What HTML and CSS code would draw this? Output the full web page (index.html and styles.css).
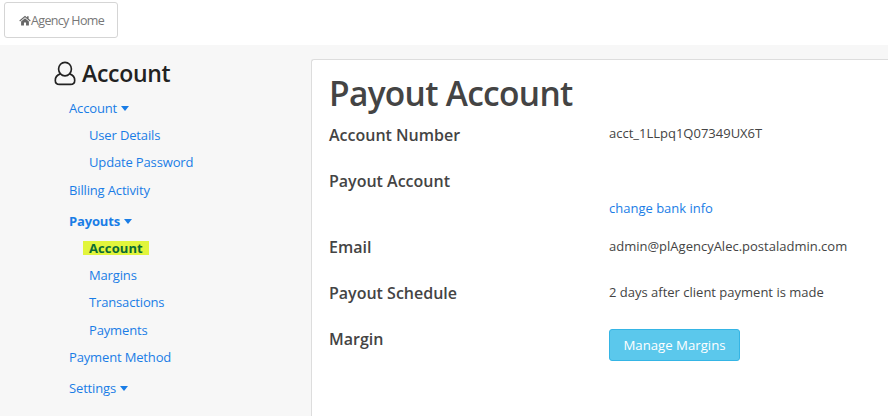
FILE: index.html
```html
<!DOCTYPE html>
<html lang="en">
<head>
    <meta charset="UTF-8">
    <meta name="viewport" content="width=device-width, initial-scale=1.0">
    <title>Payout Account</title>
    <link rel="stylesheet" href="styles.css">
</head>
<body>
    <header class="topbar">
        <a class="home-btn" href="#">
            <svg class="home-icon" viewBox="0 0 16 14"><path d="M8 .6 L.4 7 L1.4 8.200 L8 2.800 L14.600 8.200 L15.600 7 L12.800 4.700 V1.200 H10.800 V3 Z M2.800 8.400 V13.600 H6.600 V9.600 H9.400 V13.600 H13.200 V8.400 L8 4.100 Z"/></svg>Agency Home
        </a>
    </header>
    <div class="layout">
        <aside class="sidebar">
            <h2 class="side-title">
                <svg class="user-icon" viewBox="0 0 24 26"><ellipse cx="12" cy="8.200" rx="7" ry="7.400"/><path d="M6.800 13.400 C3.500 14.500 1.400 17 1.400 20.500 C1.400 23.500 3.500 24.800 6 24.800 H18 C20.500 24.800 22.600 23.500 22.600 20.500 C22.600 17 20.500 14.500 17.200 13.400"/></svg>
                Account
            </h2>
            <nav class="side-nav">
                <a class="lvl1" href="#">Account <span class="caret"></span></a>
                <a class="lvl2" href="#">User Details</a>
                <a class="lvl2" href="#">Update Password</a>
                <a class="lvl1" href="#">Billing Activity</a>
                <a class="lvl1 gap bold" href="#">Payouts <span class="caret"></span></a>
                <a class="lvl2" href="#"><span class="current">Account</span></a>
                <a class="lvl2" href="#">Margins</a>
                <a class="lvl2" href="#">Transactions</a>
                <a class="lvl2" href="#">Payments</a>
                <a class="lvl1" href="#">Payment Method</a>
                <a class="lvl1 gap" href="#">Settings <span class="caret"></span></a>
            </nav>
        </aside>
        <main class="card">
            <h1>Payout Account</h1>
            <div class="row row-number">
                <div class="label">Account Number</div>
                <div class="value">acct_1LLpq1Q07349UX6T</div>
            </div>
            <div class="row row-bank">
                <div class="label">Payout Account</div>
                <div class="value bank"><a href="#">change bank info</a></div>
            </div>
            <div class="row row-email">
                <div class="label">Email</div>
                <div class="value nudge">admin@plAgencyAlec.postaladmin.com</div>
            </div>
            <div class="row row-schedule">
                <div class="label">Payout Schedule</div>
                <div class="value nudge">2 days after client payment is made</div>
            </div>
            <div class="row row-margin">
                <div class="label">Margin</div>
                <div class="value btn-wrap"><a class="info-btn" href="#">Manage Margins</a></div>
            </div>
        </main>
    </div>
</body>
</html>
```

FILE: styles.css
```css
* {
    box-sizing: border-box;
}
html, body {
    height: 100%;
}
body {
    margin: 0;
    font-family: "Open Sans", "Noto Sans", sans-serif;
    color: #444;
    background: #f7f7f7;
    overflow: hidden;
}
a {
    color: #1a7de6;
    text-decoration: none;
}
.topbar {
    height: 45px;
    background: #fff;
    padding: 2px 4px;
}
.home-btn {
    display: inline-flex;
    align-items: center;
    width: 114px;
    height: 36px;
    padding-left: 14px;
    border: 1px solid #d5d5d5;
    border-radius: 3px;
    color: #777;
    font-size: 12.500px;
    letter-spacing: -.65px;
}
.home-icon {
    width: 12px;
    height: 11px;
    fill: #666;
}
.layout {
    display: flex;
    height: 371px;
}
.sidebar {
    width: 311px;
    padding: 12px 0 0 54px;
}
.side-title {
    display: flex;
    align-items: center;
    gap: 6px;
    margin: 0;
    height: 32px;
    color: #222;
    font-size: 23px;
    font-weight: 600;
    letter-spacing: -.3px;
}
.user-icon {
    width: 22px;
    height: 25px;
    fill: none;
    stroke: #222;
    stroke-width: 1.800;
}
.side-nav {
    display: flex;
    flex-direction: column;
    margin-top: 6px;
    font-size: 13px;
    letter-spacing: -.15px;
}
.side-nav a {
    line-height: 27.200px;
}
.lvl1 {
    padding-left: 15px;
}
.lvl2 {
    padding-left: 35px;
}
.gap {
    margin-top: 4px;
}
.bold {
    font-weight: 700;
}
.caret {
    display: inline-block;
    margin-left: 1px;
    vertical-align: 2px;
    border-top: 5px solid #1a7de6;
    border-left: 4.500px solid transparent;
    border-right: 4.500px solid transparent;
}
.current {
    display: inline-block;
    padding: 0 6px;
    margin-left: -6px;
    line-height: 14px;
    background: #e2f53c;
    color: #0b6b35;
    font-weight: 700;
    letter-spacing: .1px;
}
.card {
    flex: 1;
    margin-top: 14px;
    padding: 0 17px;
    background: #fff;
    border: 1px solid #ddd;
    border-right: 0;
    border-bottom: 0;
    border-top-left-radius: 3px;
}
.card h1 {
    margin: 10px 0 0;
    height: 46px;
    font-size: 33.500px;
    line-height: 46px;
    font-weight: 600;
    letter-spacing: -.7px;
}
.row {
    display: flex;
}
.label {
    width: 280px;
    font-size: 16px;
    font-weight: 600;
    line-height: 24px;
}
.value {
    font-size: 13px;
    line-height: 20px;
}
.row-number {
    margin-top: 7px;
    height: 46px;
}
.row-bank {
    height: 66px;
}
.bank {
    padding-top: 29px;
}
.bank a {
    display: block;
}
.row-email, .row-schedule {
    height: 46px;
}
.nudge {
    padding-top: 1px;
}
.btn-wrap {
    padding-top: 2px;
}
.info-btn {
    display: block;
    width: 131px;
    height: 32px;
    border: 1px solid #35b5e5;
    border-radius: 3px;
    background: #5bc8ec;
    color: #fff;
    font-size: 13.200px;
    line-height: 30px;
    text-align: center;
}
```
